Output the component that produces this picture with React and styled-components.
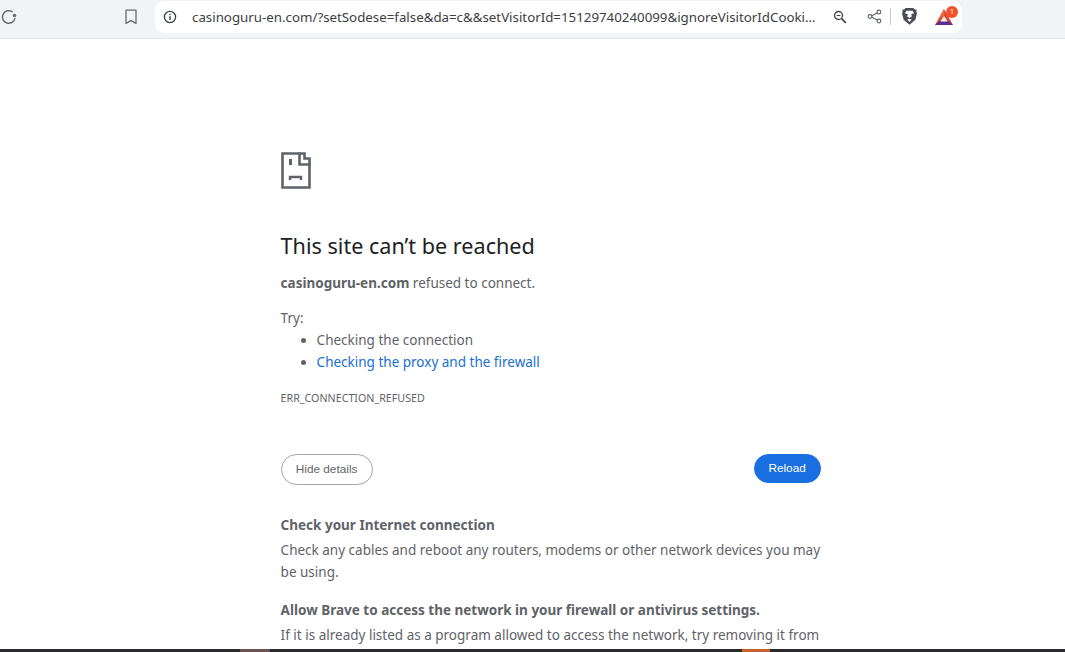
import React from 'react';
import styled, {createGlobalStyle} from 'styled-components';

const GlobalStyle = createGlobalStyle`
    html, body {
        margin: 0;
        height: 100%;
        overflow: hidden;
        background: #fff;
    }
    body {
        font-family: "Noto Sans", "Open Sans", sans-serif;
    }
`;

const Page = styled.div`
    width: 1065px;
    height: 652px;
    display: flex;
    flex-direction: column;
    overflow: hidden;
`;

const Toolbar = styled.div`
    height: 39px;
    flex: none;
    box-sizing: border-box;
    display: flex;
    align-items: center;
    background: #f1f3f5;
    border-bottom: 1px solid #e4e6e9;
    padding: 0 103px 5px 0;
`;

const ToolIcon = styled.svg`
    flex: none;
    display: block;
    margin-left: ${p => p.$left || 0}px;
`;

const UrlBar = styled.div`
    flex: 1;
    height: 32px;
    margin-left: 17px;
    display: flex;
    align-items: center;
    background: #fff;
    border-radius: 9px;
    padding-left: 8px;
    min-width: 0;
`;

const UrlText = styled.span`
    flex: 1;
    min-width: 0;
    margin-left: 15px;
    font-size: 13.3px;
    color: #3c4043;
    white-space: nowrap;
`;

const Divider = styled.span`
    width: 1px;
    height: 17px;
    background: #c4c7cb;
    margin-left: 8px;
    flex: none;
`;

const BadgeBox = styled.div`
    position: relative;
    width: 20px;
    height: 18px;
    margin-left: 16px;
    margin-right: 8px;
    flex: none;
`;

const Badge = styled.span`
    position: absolute;
    top: -2px;
    right: -4px;
    width: 12px;
    height: 12px;
    border-radius: 50%;
    background: #f4502a;
    color: #fff;
    font-size: 7px;
    line-height: 12px;
    text-align: center;
`;

const Content = styled.main`
    flex: 1;
    min-height: 0;
    width: 540px;
    margin-left: 280.6px;
    padding-top: 113px;
    color: #5f6368;
    font-size: 13.5px;
`;

const Heading = styled.h1`
    margin: 42px 0 0;
    font-size: 21.6px;
    font-weight: 400;
    line-height: 30px;
    color: #202124;
`;

const Line = styled.p`
    margin: ${p => p.$top || 0}px 0 0;
    line-height: 22px;
`;

const Strong = styled.strong`
    font-weight: 700;
`;

const TryList = styled.ul`
    margin: 0;
    padding-left: 36px;
    line-height: 22px;
`;

const TipLink = styled.a`
    color: #1a6fd4;
    text-decoration: none;
`;

const ErrorCode = styled.div`
    margin-top: 17px;
    font-size: 10.7px;
    line-height: 16px;
    color: #5f6368;
`;

const Buttons = styled.div`
    display: flex;
    justify-content: space-between;
    align-items: flex-start;
    margin-top: 48px;
`;

const Button = styled.button`
    height: ${p => p.$primary ? 29 : 31}px;
    padding: 0 0 2px;
    width: ${p => p.$primary ? 67 : 92}px;
    border-radius: 16px;
    box-sizing: border-box;
    border: 1px solid ${p => p.$primary ? '#1a6fe0' : '#a3a5a8'};
    background: ${p => p.$primary ? '#1a6fe0' : '#fff'};
    color: ${p => p.$primary ? '#fff' : '#5f6368'};
    font-family: "Liberation Sans", Arial, sans-serif;
    font-size: 11.8px;
`;

const Details = styled.section`
    margin-top: 29px;
`;

const Taskbar = styled.div`
    height: 3px;
    flex: none;
    display: flex;
    background: #2b2a2c;
`;

const TaskItem = styled.span`
    width: ${p => p.$width}px;
    margin-left: ${p => p.$left}px;
    background: ${p => p.$color};
`;

const App = () => {
    return (
        <Page>
            <GlobalStyle />
            <Toolbar>
                <ToolIcon $left={1} width="16" height="16" viewBox="0 0 16 16" fill="none">
                    <path d="M14 9A6.300 6.300 0 1 1 11.600 3" stroke="#6a6d70" strokeWidth="1.500" />
                    <circle cx="13.500" cy="6.500" r="1.800" fill="#6a6d70" />
                </ToolIcon>
                <ToolIcon $left={107} width="14" height="16" viewBox="0 0 14 16" fill="none">
                    <path d="M2 1.200h10v13.200L7 11.600l-5 2.800z" stroke="#696c70" strokeWidth="1.300" strokeLinejoin="round" />
                </ToolIcon>
                <UrlBar>
                    <ToolIcon width="14" height="14" viewBox="0 0 14 14" fill="none">
                        <circle cx="7" cy="7" r="5.600" stroke="#3c4043" strokeWidth="1.300" />
                        <rect x="6.300" y="6.200" width="1.400" height="3.800" fill="#3c4043" />
                        <rect x="6.300" y="3.800" width="1.400" height="1.400" fill="#3c4043" />
                    </ToolIcon>
                    <UrlText>casinoguru-en.com/?setSodese=false&amp;da=c&amp;&amp;setVisitorId=15129740240099&amp;ignoreVisitorIdCooki…</UrlText>
                    <ToolIcon width="14" height="14" viewBox="0 0 14 14" fill="none">
                        <circle cx="5.500" cy="5.500" r="4" stroke="#45484c" strokeWidth="1.300" />
                        <path d="M3.600 5.500h3.800" stroke="#45484c" strokeWidth="1.100" />
                        <path d="M8.600 8.600l4.200 4.200" stroke="#45484c" strokeWidth="1.700" />
                    </ToolIcon>
                    <ToolIcon $left={20} width="15" height="15" viewBox="0 0 15 15" fill="none">
                        <path d="M11.600 3.200L3.600 7.500l8 4.300" stroke="#5f6368" strokeWidth="1.100" />
                        <circle cx="11.900" cy="3" r="1.900" fill="#fff" stroke="#5f6368" strokeWidth="1.100" />
                        <circle cx="3" cy="7.500" r="1.900" fill="#fff" stroke="#5f6368" strokeWidth="1.100" />
                        <circle cx="11.900" cy="12" r="1.900" fill="#fff" stroke="#5f6368" strokeWidth="1.100" />
                    </ToolIcon>
                    <Divider />
                    <ToolIcon $left={10} width="17" height="19" viewBox="0 0 17 19">
                        <path d="M4.600 1h7.800l1.400 1.500 2 .3-.5 2 .7 1.400-1.600 6.600-3.800 3.300-2.100 1.700-2.100-1.700-3.800-3.300L1 6.200l.7-1.400-.5-2 2-.3z" fill="#4a4d55" />
                        <path d="M3.800 6.200l2.900.9-.5 2.500 2.300 1.500 2.300-1.500-.5-2.500 2.900-.9-1.800-2.400H5.600z" fill="#fff" />
                        <path d="M6.300 12.600l2.200-.8 2.200.8-2.200 2.300z" fill="#fff" />
                    </ToolIcon>
                    <BadgeBox>
                        <ToolIcon width="20" height="18" viewBox="0 -1 20 18">
                            <path d="M10 0L1 16h18z" fill="#e0492f" />
                            <path d="M1 16l4.500-4h9L19 16z" fill="#5b2d90" />
                            <path d="M10 7l-3.500 5.500h7z" fill="#fff" />
                            <path d="M10 0L5 9.500 10 7z" fill="#f26b35" />
                        </ToolIcon>
                        <Badge>1</Badge>
                    </BadgeBox>
                </UrlBar>
            </Toolbar>
            <Content>
                <ToolIcon width="30" height="37" viewBox="0 0 30 37" fill="none">
                    <path d="M1.500 1.500h17v11h10v23h-27z" stroke="#5f6368" strokeWidth="2.600" />
                    <path d="M18.500 1.500h5v5h5v6" stroke="#5f6368" strokeWidth="2.600" />
                    <rect x="8" y="7" width="3" height="6" fill="#5f6368" />
                    <path d="M9 28v-3h11v3" stroke="#5f6368" strokeWidth="2.400" />
                </ToolIcon>
                <Heading>This site can’t be reached</Heading>
                <Line $top={11}><Strong>casinoguru-en.com</Strong> refused to connect.</Line>
                <Line $top={13}>Try:</Line>
                <TryList>
                    <li>Checking the connection</li>
                    <li><TipLink href="#proxy">Checking the proxy and the firewall</TipLink></li>
                </TryList>
                <ErrorCode>ERR_CONNECTION_REFUSED</ErrorCode>
                <Buttons>
                    <Button>Hide details</Button>
                    <Button $primary>Reload</Button>
                </Buttons>
                <Details>
                    <Line><Strong>Check your Internet connection</Strong></Line>
                    <Line $top={3}>Check any cables and reboot any routers, modems or other network devices you may be using.</Line>
                    <Line $top={16}><Strong>Allow Brave to access the network in your firewall or antivirus settings.</Strong></Line>
                    <Line $top={3}>If it is already listed as a program allowed to access the network, try removing it from</Line>
                </Details>
            </Content>
            <Taskbar>
                <TaskItem $left={240} $width={30} $color="#6b5350" />
                <TaskItem $left={472} $width={28} $color="#c8622c" />
            </Taskbar>
        </Page>
    );
};

export default App;
